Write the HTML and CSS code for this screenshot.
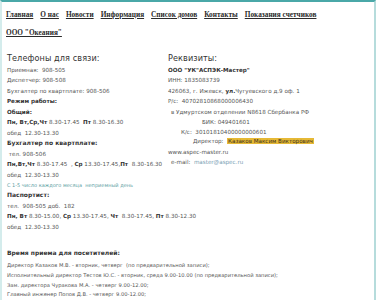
FILE: index.html
```html
<!DOCTYPE html>
<html lang="ru">
<head>
<meta charset="utf-8">
<title>Контакты</title>
<link rel="stylesheet" href="styles.css">
</head>
<body>
<div class="page">
  <nav class="nav">
    <a href="#">Главная</a>
    <a href="#">О нас</a>
    <a href="#">Новости</a>
    <a href="#">Информация</a>
    <a href="#">Список домов</a>
    <a href="#">Контакты</a>
    <a href="#">Показания счетчиков</a>
  </nav>
  <div class="company"><a href="#">ООО "Океания"</a></div>

  <div class="cols">
    <div class="col left">
      <h2>Телефоны для связи:</h2>
      <p>Приемная:&nbsp; 908-505</p>
      <p>Диспетчер: 908-508</p>
      <p>Бухгалтер по квартплате: 908-506</p>
      <p class="b">Режим работы:</p>
      <p class="b">Общий:</p>
      <p><b>Пн, Вт,Ср,Чт</b> 8.30-17.45 &nbsp;<b>Пт</b> 8.30-16.30</p>
      <p>обед&nbsp; 12.30-13.30</p>
      <p class="b big">Бухгалтер по квартплате:</p>
      <p>&nbsp;тел. 908-506</p>
      <p><b>Пн,Вт,Чт</b> 8.30-17.45&nbsp; , <b>Ср</b> 13.30-17.45,<b>Пт</b>&nbsp; 8.30-16.30</p>
      <p>обед&nbsp; 12.30-13.30</p>
      <p class="note">С 1-5 число каждого месяца&nbsp; неприемный день</p>
      <p class="b big">Паспортист:</p>
      <p>тел.&nbsp; 908-505 доб.&nbsp; 182</p>
      <p class="nowrap"><b>Пн, Вт</b> 8.30-15.00, <b>Ср</b> 13.30-17.45, <b>Чт</b>&nbsp; 8.30-17.45, <b>Пт</b> 8.30-12.30</p>
      <p>обед&nbsp; 12.30-13.30</p>
    </div>
    <div class="col right">
      <h2>Реквизиты:</h2>
      <p class="b">ООО "УК"АСПЭК-Мастер"</p>
      <p>ИНН: 1835083739</p>
      <p>426063, г. Ижевск, <b>ул.</b>Чугуевского д.9 оф. 1</p>
      <p>Р/с:&nbsp; 40702810868000006430</p>
      <p class="i1">в Удмуртском отделении N8618 Сбербанка РФ</p>
      <p class="i3">БИК: 049401601</p>
      <p class="i2 tight">К/с:&nbsp; 30101810400000000601</p>
      <p class="i4 tight">Директор:&nbsp; <span class="hl">Казаков Максим Викторович</span></p>
      <p>www.aspec-master.ru</p>
      <p class="i1">e-mail:&nbsp; <a class="mail" href="#">master@aspec.ru</a></p>
    </div>
  </div>

  <div class="visit">
    <p class="b big">Время приема для посетителей:</p>
    <p>Директор Казаков М.В. - вторник, четверг&nbsp; (по предварительной записи);</p>
    <p>Исполнительный директор Тестов Ю.С. - вторник, среда 9.00-10.00 (по предварительной записи);</p>
    <p>Зам. директора Чуракова М.А. - четверг 9.00-12.00;</p>
    <p>Главный инженер Попов Д.В. - четверг 9.00-12.00;</p>
  </div>
</div>
</body>
</html>
```

FILE: styles.css
```css
html, body {
  margin: 0;
  padding: 0;
  background: #ffffff;
}

.page {
  width: 376px;
  height: 300px;
  box-sizing: border-box;
  border-top: 2px solid #4aa8a8;
  border-left: 2px solid #d4ecec;
  border-right: 2px solid #b6dcdc;
  overflow: hidden;
  font-family: "DejaVu Sans", Verdana, sans-serif;
  font-size: 5.6px;
  color: #555555;
}

.nav {
  display: flex;
  gap: 7px;
  padding: 6px 0 0 4px;
  height: 12px;
  align-items: center;
}

.nav a,
.company a {
  font-family: "Liberation Serif", "Times New Roman", serif;
  font-weight: bold;
  font-size: 7.3px;
  color: #2b2b2b;
  text-decoration: underline;
  white-space: nowrap;
}

.company {
  padding: 7px 0 0 4px;
  height: 12px;
  line-height: 12px;
}

.cols {
  display: grid;
  grid-template-columns: 161px 1fr;
  padding: 14px 0 0 5px;
}

.col h2 {
  margin: 0 0 2px 0;
  font-size: 8.1px;
  font-weight: normal;
  color: #333333;
  line-height: 10px;
  letter-spacing: 0.1px;
}

.col p,
.visit p {
  margin: 0;
  line-height: 10.45px;
  white-space: nowrap;
}

.right p.tight {
  line-height: 9.4px;
}

.b {
  font-weight: bold;
  color: #333333;
}

b {
  color: #333333;
}

.big {
  font-size: 6px;
}

.note {
  color: #5c9ea2;
  font-size: 5px;
}

.right p.i1 { padding-left: 3px; }
.right p.i2 { padding-left: 13px; }
.right p.i3 { padding-left: 34px; }
.right p.i4 { padding-left: 25px; }

.hl {
  background: #e6b936;
  color: #3a3020;
  padding: 0 1px;
}

.mail {
  color: #7aa0b4;
  text-decoration: none;
}

.visit {
  padding: 16px 0 0 5px;
}

.visit p {
  font-size: 5.2px;
  line-height: 9.8px;
}

.visit p.big {
  font-size: 6px;
  margin-bottom: 3px;
}
```
